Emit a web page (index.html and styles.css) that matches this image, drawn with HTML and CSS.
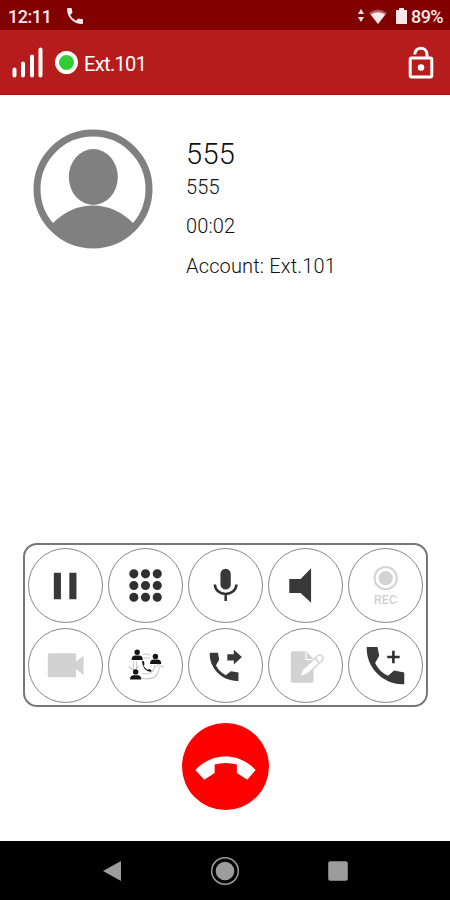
FILE: index.html
```html
<!DOCTYPE html>
<html lang="en">
<head>
<meta charset="utf-8">
<title>Call</title>
<link rel="stylesheet" href="styles.css">
</head>
<body>
<div class="status">
  <span class="clock">12:11</span>
  <svg class="status-phone" width="16" height="16" viewBox="3 3 18 18"><path d="M3 4Q3 3 4 3h3.500q1 0 1 1 0 1.800.6 3.600.1.600-.3 1l-2.200 2.200q2.200 4.400 6.600 6.600l2.200-2.200q.400-.4 1-.3 1.800.6 3.600.6 1 0 1 1V20q0 1-1 1C10.600 21 3 13.400 3 4z"/></svg>
  <span class="fill"></span>
  <svg class="arrows" width="6" height="13" viewBox="0 0 6 13"><path d="M3 0l3 5H0zM3 13l3-5H0z"/></svg>
  <svg class="wifi" width="18" height="15" viewBox="0 0 18 15"><path class="faint" d="M0 4Q9-3 18 4L9 15z"/><path d="M1.800 5.500Q9 .8 16.200 5.500L9 15z"/></svg>
  <svg class="battery" width="11" height="16" viewBox="0 0 11 16"><path d="M3 0h5v2h3v14H0V2h3z"/></svg>
  <span class="percent">89%</span>
</div>
<header class="bar">
  <svg width="31" height="31" viewBox="0 0 31 31"><path class="signal" d="M2.500 22.500v6M11 16.500v12M20 9.500v19M28.500 2.500v26"/></svg>
  <span class="presence"></span>
  <span class="ext">Ext.101</span>
  <span class="fill"></span>
  <svg width="26" height="33" viewBox="0 0 26 33"><g class="lock"><rect x="2.200" y="12" width="21.600" height="19" rx="1.500"/><path d="M6.800 8.500C7 0 19 0 19 8.500V12"/></g><circle class="white" cx="13" cy="21.500" r="3.300"/></svg>
</header>
<main>
  <section class="caller">
    <svg class="avatar" width="120" height="120" viewBox="0 0 120 120"><circle class="ring" cx="60" cy="60" r="56"/><ellipse cx="60.300" cy="48" rx="24.500" ry="28"/><path d="M19 95Q37 76.500 60 76.500T101 95A54 54 0 0 1 19 95z"/></svg>
    <div class="info">
      <div class="name">555</div>
      <div class="line number">555</div>
      <div class="line">00:02</div>
      <div class="line">Account: Ext.101</div>
    </div>
  </section>
  <section class="panel">
    <button class="key"><svg viewBox="0 0 74 74"><path d="M25.500 24.500h7v26h-7zM40.800 24.500h7v26h-7z"/></svg></button>
    <button class="key"><svg viewBox="0 0 74 74"><g class="dots"><path d="M25.500 25.500h0M37 25.500h0M48.600 25.500h0M25.500 37h0M37 37h0M48.600 37h0M25.500 48.600h0M37 48.600h0M48.600 48.600h0"/></g></svg></button>
    <button class="key"><svg viewBox="0 0 74 74"><rect x="32" y="20.500" width="10.200" height="20.500" rx="5.100"/><path class="mic" d="M26.500 36C27 48.500 47.200 48.500 47.800 36M37.200 45v7.300"/></svg></button>
    <button class="key"><svg viewBox="0 0 74 74"><path d="M21 30.500h11.200L42.500 20v34L32.200 44.500H21z"/></svg></button>
    <button class="key off"><svg viewBox="0 0 74 74"><circle class="rec-ring" cx="37.200" cy="29.800" r="11"/><circle cx="37.200" cy="29.800" r="7"/><text x="37" y="55.500">REC</text></svg></button>
    <button class="key off"><svg viewBox="0 0 74 74"><path d="M20.500 25h26q1 0 1 1v7l7.300-5.500v19l-7.300-6v7q0 1-1 1h-26q-1 0-1-1V26q0-1 1-1z"/></svg></button>
    <button class="key"><svg viewBox="0 0 74 74"><g class="links"><path d="M34 26.500Q38 24.500 42 27M35 29.500h6M25 33v8M28 33v8M20.500 38l5 4 5-4M34 45Q45 47 46 37M33 49.500Q50 53 50.500 38M45 39l5-3 5 3"/></g><g class="people"><circle cx="28.800" cy="24" r="2.700"/><path d="M23.300 31.500q0-4 3-4.300h5q3 .3 3 4.300z"/><circle cx="46.800" cy="28" r="2.700"/><path d="M41.500 35.500q0-4 3-4.300h5q3 .3 3 4.300z"/><circle cx="27.300" cy="43.300" r="2.700"/><path d="M21.800 50.800q0-4 3-4.300h5q3 .3 3 4.300z"/></g><path class="people" d="M33.500 32.500l2 .2.500 3.300-1 1q1.500 3 4.200 4.500l1.300-1 2.200 1v2Q34 42.500 33.500 32.500z"/></svg></button>
    <button class="key"><svg viewBox="0 0 74 74"><path d="M21.500 24.500h8l1.300 6.500-3.200 6Q31 43.500 37.300 46.500l5-3.800 7.500 1.300v8.300C34 53 20.500 39.500 21.500 24.500z"/><path d="M38.800 26h6.400v-4.500l8 7.200-8 7.200V32h-6.400z"/></svg></button>
    <button class="key off"><svg viewBox="0 0 74 74"><path d="M24 23h14l7 7.500V52q0 2-2 2H24.500q-2 0-2-2V25q0-2 1.500-2z"/><path class="fold" d="M37.500 23v8h8"/><path class="pencil" d="M31.500 48l2.500-7L49 27.500q2.500-2 4.500 0t0 4.500L38.500 45.500z"/><path class="seam" d="M46.500 30l4.500 4.500"/></svg></button>
    <button class="key"><svg viewBox="0 0 74 74"><path d="M18.500 18.800h10.600l1.700 8.700-4 7Q31 43.500 39.500 47l6-5 10 2v11.500C35 56.500 17.500 39 18.500 18.800z"/><path class="plus" d="M38.700 28.600H51M44.800 22.400v12.400"/></svg></button>
  </section>
  <button class="hangup"><svg viewBox="0 0 88 88"><path d="M13.500 47.500C30 29.500 58 29.500 74.500 47.500L66 57.500 55.500 50.500V42Q44 38.800 33 42v8.500L22.500 57.500z"/></svg></button>
</main>
<nav class="nav">
  <svg class="back" width="20" height="22" viewBox="0 0 20 22"><path d="M1 11L19 1v20z"/></svg>
  <svg width="30" height="30" viewBox="0 0 30 30"><circle class="home-ring" cx="15" cy="15" r="13.300"/><circle cx="15" cy="15" r="9.300"/></svg>
  <svg class="recent" width="20" height="20" viewBox="0 0 20 20"><rect x=".2" y=".2" width="19.600" height="19.600" rx="2"/></svg>
</nav>
</body>
</html>
```
FILE: styles.css
```css
* { box-sizing: border-box; }
body {
  margin: 0;
  height: 900px;
  display: flex;
  flex-direction: column;
  background: #fff;
  font-family: Roboto, "Liberation Sans", sans-serif;
  overflow: hidden;
}
svg { display: block; flex: none; }
button { padding: 0; background: #fff; font: inherit; }
.fill { flex: 1; }

.status {
  height: 30px;
  display: flex;
  align-items: center;
  padding: 2px 7px 0 8px;
  background: #810000;
  color: #fbe9e9;
  fill: #fbe9e9;
  font-size: 18px;
  font-weight: 500;
}
.clock { width: 59px; letter-spacing: -0.450px; }
.status-phone { margin-top: -1px; }
.percent { letter-spacing: -0.600px; }
.arrows { margin-right: 5px; margin-top: -2px; }
.wifi { margin-right: 9px; }
.battery { margin-right: 4px; }
.faint { opacity: .4; }

.bar {
  height: 65px;
  display: flex;
  align-items: center;
  padding: 0 16px 0 12px;
  background: #b71c1c;
  border-bottom: 1px solid #a80f12;
  color: #fff;
  font-size: 20px;
}
.ext { letter-spacing: -0.650px; padding-top: 3px; }
.signal { fill: none; stroke: #fff; stroke-width: 4; stroke-linecap: round; }
.presence {
  width: 23px;
  height: 23px;
  margin: 0 6px 0 12px;
  border: 4px solid #fff;
  border-radius: 50%;
  background: #32cd32;
}
.lock { fill: none; stroke: #fff; stroke-width: 3; }
.white { fill: #fff; }

main {
  height: 746px;
  display: flex;
  flex-direction: column;
  align-items: center;
}
.caller {
  width: 100%;
  height: 448px;
  display: flex;
  padding: 34px 0 0 33px;
}
.avatar { fill: #808080; }
.ring { fill: none; stroke: #808080; stroke-width: 7; }
.info { padding: 7px 0 0 33px; color: #111; }
.name { font-size: 29px; font-weight: 300; line-height: 36px; height: 36px; letter-spacing: .300px; }
.line { font-size: 20px; font-weight: 300; line-height: 39.500px; letter-spacing: .160px; }
.number { line-height: 30px; margin-bottom: 5px; }

.panel {
  width: 405px;
  height: 164px;
  display: grid;
  grid-template-columns: repeat(5, 75px);
  gap: 5px;
  place-content: start center;
  padding-top: 3px;
  border: 2px solid #777;
  border-radius: 14px;
}
.key {
  width: 75px;
  height: 75px;
  border: 1px solid #858585;
  border-radius: 50%;
  fill: #383838;
}
.key svg { width: 75px; height: 75px; margin: -1px; }
.off { fill: #d2d2d2; }
.dots { stroke: #303030; stroke-width: 9; stroke-linecap: round; }
.mic { fill: none; stroke: #303030; stroke-width: 2.500; }
.rec-ring { fill: none; stroke: #d4d4d4; stroke-width: 2; }
.off text { font-size: 12.500px; font-weight: 500; text-anchor: middle; }
.links { fill: none; stroke: #c4c4c4; stroke-width: 1; }
.people { fill: #151515; }
.fold { fill: none; stroke: #fff; stroke-width: 1; }
.pencil { fill: #fff; stroke: #d2d2d2; stroke-width: 1.300; }
.seam { stroke: #d2d2d2; stroke-width: 1.500; }
.plus { stroke: #303030; stroke-width: 2.600; }

.hangup {
  width: 87px;
  height: 87px;
  margin: 16px 0 0 1px;
  border: 0;
  border-radius: 50%;
  background: #fe0000;
  fill: #fff;
}

.nav {
  height: 59px;
  display: grid;
  grid-template-columns: repeat(3, 113px);
  justify-content: center;
  justify-items: center;
  align-items: center;
  background: #000;
  fill: #9c9c9c;
}
.home-ring { fill: none; stroke: #9c9c9c; stroke-width: 1.500; }
```
